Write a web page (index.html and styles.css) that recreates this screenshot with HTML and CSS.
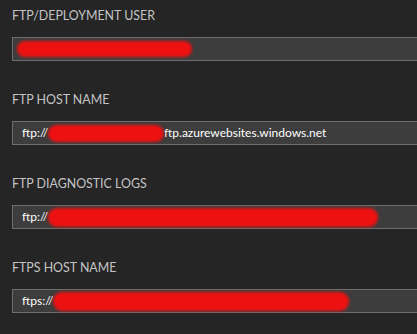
FILE: index.html
```html
<!DOCTYPE html>
<html lang="en">
<head>
  <meta charset="UTF-8" />
  <title>FTP settings</title>
  <link rel="stylesheet" href="styles.css">
</head>
<body>
  <div class="panel">
    <div class="field">
      <div class="label">FTP/DEPLOYMENT USER</div>
      <div class="box"><span class="blot blot-user"></span></div>
    </div>
    <div class="field">
      <div class="label">FTP HOST NAME</div>
      <div class="box">ftp://<span class="blot blot-host"></span>ftp.azurewebsites.windows.net</div>
    </div>
    <div class="field">
      <div class="label">FTP DIAGNOSTIC LOGS</div>
      <div class="box">ftp://<span class="blot blot-logs"></span></div>
    </div>
    <div class="field">
      <div class="label">FTPS HOST NAME</div>
      <div class="box">ftps://<span class="blot blot-ftps"></span></div>
    </div>
  </div>
</body>
</html>
```

FILE: styles.css
```css
body {
  margin: 0;
  background: #252525;
  font-family: Lato, 'Open Sans', sans-serif;
  overflow: hidden;
}

.panel {
  padding-left: 12px;
}

.field {
  height: 84px;
  box-sizing: border-box;
  padding-top: 8px;
  display: flex;
  flex-direction: column;
  gap: 13px;
}

.label {
  color: #c4c4c4;
  font-size: 12.4px;
  line-height: 16px;
  height: 16px;
}

.box {
  width: 420px;
  height: 24px;
  box-sizing: border-box;
  border: 1px solid #6e6e6e;
  background: #3d3d3d;
  color: #fff;
  font-size: 12px;
  line-height: 22px;
  padding-left: 9px;
  display: flex;
  align-items: center;
  white-space: nowrap;
}

.blot {
  display: inline-block;
  height: 16px;
  background: #ee1111;
  border-radius: 9px;
  filter: blur(1.5px);
}

.blot-user {
  width: 175px;
  margin-left: -5px;
}

.blot-host {
  width: 116px;
  height: 17px;
}

.blot-logs {
  width: 330px;
  height: 19px;
}

.blot-ftps {
  width: 296px;
  height: 19px;
}
```
